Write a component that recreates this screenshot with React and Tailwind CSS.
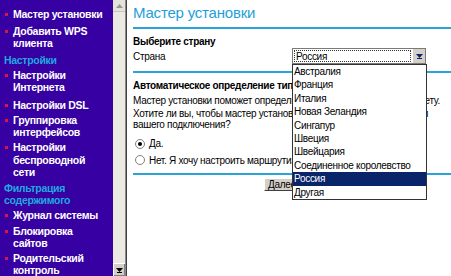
import React from "react";

const F = { fontFamily: '"Liberation Sans", Arial, sans-serif' };

function Item({ children, className = "" }) {
  return (
    <div className={"relative pl-[13px] text-white font-bold text-[10.5px] tracking-[-0.3px] leading-[12.4px] whitespace-nowrap " + className}>
      <span className="absolute left-[5px] top-[5px] w-[3px] h-[3px] bg-[#e0104c]" />
      {children}
    </div>
  );
}

function Head({ children, className = "" }) {
  return (
    <div className={"pl-[4px] text-[#22a8e0] font-bold text-[10.5px] tracking-[-0.3px] leading-[12.4px] whitespace-nowrap " + className}>{children}</div>
  );
}

const countries = [
  "Австралия",
  "Франция",
  "Италия",
  "Новая Зеландия",
  "Сингапур",
  "Швеция",
  "Швейцария",
  "Соединенное королевство",
  "Россия",
  "Другая",
];

export default function App() {
  return (
    <div className="w-[451px] h-[276px] flex overflow-hidden bg-white relative" style={F}>
      {/* Sidebar */}
      <div className="w-[113px] shrink-0 h-full bg-[#3600a3] flex flex-col pt-[8px] overflow-hidden">
        <Item>Мастер установки</Item>
        <Item className="mt-[4.6px]">Добавить WPS<br />клиента</Item>
        <div className="ml-[4px] mr-[7px] mt-[1.4px] h-[2px] bg-[#22a8e0]" />
        <Head className="mt-[2.5px]">Настройки</Head>
        <Item className="mt-[2.6px]">Настройки<br />Интернета</Item>
        <Item className="mt-[5.5px]">Настройки DSL</Item>
        <Item className="mt-[2.6px]">Группировка<br />интерфейсов</Item>
        <Item className="mt-[2.6px]">Настройки<br />беспроводной<br />сети</Item>
        <Head className="mt-[3px]">Фильтрация<br />содержимого</Head>
        <Item className="mt-[3px]">Журнал системы</Item>
        <Item className="mt-[3px]">Блокировка<br />сайтов</Item>
        <Item className="mt-[2px]">Родительский<br />контроль</Item>
      </div>

      {/* Scrollbar */}
      <div className="w-[12px] shrink-0 h-full bg-[#ebe9e2] flex flex-col justify-between">
        <div className="h-[12px] bg-[#e4e2da] border-b border-[#c9c6bd] flex items-center justify-center">
          <svg width="7" height="4" viewBox="0 0 7 4"><path d="M3.5 0 L7 4 L0 4 Z" fill="#9a978f" /></svg>
        </div>
        <div className="h-[13px] bg-[#d4d0c8] border-t border-[#ffffff] border-l border-l-[#ffffff] shadow-[inset_-1px_-1px_0_#808080] flex items-center justify-center">
          <svg width="7" height="5" viewBox="0 0 7 5"><path d="M0 0 L7 0 L3.5 4 Z" fill="#000" /><rect x="1" y="4" width="5" height="1" fill="#000" /></svg>
        </div>
      </div>
      <div className="w-[1px] shrink-0 h-full bg-[#8a8a8a]" />
      <div className="w-[1px] shrink-0 h-full bg-[#404040]" />

      {/* Main */}
      <div className="flex-1 min-w-0 overflow-hidden h-full pl-[6px] flex flex-col text-[10px] tracking-[-0.3px] text-black">
        <div className="pt-[4px] text-[15px] tracking-[-0.2px] leading-[18px] text-[#1e9fd8] whitespace-nowrap">Мастер установки</div>
        <div className="mt-[5px] h-[2px] bg-[#2aa4d8]" />
        <div className="mt-[6px] font-bold leading-[13px] whitespace-nowrap">Выберите страну</div>
        <div className="h-[16px] flex items-center">
          <div className="w-[159px] shrink-0 leading-[13px]">Страна</div>
          <div className="w-[134px] shrink-0 h-[16px] border border-[#7a7a7a] bg-white flex">
            <div className="flex-1 m-[1px] border border-dotted border-[#333] leading-[11px] pl-[1px]">Россия</div>
            <div className="w-[13px] bg-[#d4d0c8] border-l border-[#fff] flex items-center justify-center">
              <svg width="7" height="5" viewBox="0 0 7 5"><path d="M0 0 L7 0 L3.5 4 Z" fill="#0a246a" /><rect x="1" y="4" width="5" height="1" fill="#0a246a" /></svg>
            </div>
          </div>
        </div>
        <div className="mt-[7px] h-[2px] bg-[#2aa4d8]" />
        <div className="mt-[5.5px] font-bold leading-[13px] whitespace-nowrap">Автоматическое определение типа подключения</div>
        <div className="mt-[3px] leading-[12px] whitespace-nowrap">Мастер установки поможет определить тип подключения к Интернету.</div>
        <div className="mt-[1px] leading-[11px] whitespace-nowrap">Хотите ли вы, чтобы мастер установки попробовал определить тип<br />вашего подключения?</div>
        <div className="mt-[7px] flex items-center gap-[4px] h-[14px]">
          <span className="ml-[2px] w-[10px] h-[10px] rounded-full border border-[#808080] bg-white flex items-center justify-center">
            <span className="w-[4px] h-[4px] rounded-full bg-black" />
          </span>
          <span>Да.</span>
        </div>
        <div className="mt-[2.5px] flex items-center gap-[4px] h-[14px] whitespace-nowrap">
          <span className="ml-[2px] w-[10px] h-[10px] rounded-full border border-[#808080] bg-white" />
          <span>Нет. Я хочу настроить маршрутизатор самостоятельно.</span>
        </div>
        <div className="mt-[5.5px] h-[2px] bg-[#2aa4d8]" />
        <div className="mt-[3px] flex pl-[131px]">
          <button className="h-[13px] px-[3px] bg-[#d4d0c8] border border-t-white border-l-white border-r-[#404040] border-b-[#404040] text-[10px] leading-[11px]" style={F}>Далее</button>
        </div>
      </div>

      {/* Dropdown list overlay */}
      <div className="absolute left-[292px] top-[64px] w-[135px] bg-white border border-[#333] flex flex-col text-[10px] tracking-[-0.3px]">
        {countries.map((c) => (
          <div
            key={c}
            className={
              c === "Россия"
                ? "h-[13.4px] leading-[13.4px] pl-[1px] bg-[#0a246a] text-white whitespace-nowrap"
                : "h-[13.4px] leading-[13.4px] pl-[1px] text-black whitespace-nowrap"
            }
          >
            {c}
          </div>
        ))}
      </div>
    </div>
  );
}
